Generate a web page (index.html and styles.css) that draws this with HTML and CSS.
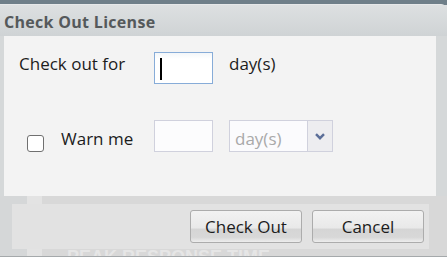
FILE: index.html
```html
<!DOCTYPE html>
<html lang="en">
    <head>
        <meta charset="utf-8">
        <title>Check Out License</title>
        <meta name="viewport" content="width=device-width, initial-scale=1">
        <link rel="stylesheet" href="styles.css">
    </head>
    <body>
		<div class="window">
			<header class="title-bar">Check Out License</header>

			<main class="content">
				<!-- How long to keep the license -->
				<div class="row row-days">
					<span class="label label-days">Check out for</span>
					<span class="field field-active"><span class="caret"></span></span>
					<span class="unit">day(s)</span>
				</div>
				<!-- Reminder before it runs out -->
				<div class="row row-warn">
					<span class="check"></span>
					<span class="label label-warn">Warn me</span>
					<span class="field"></span>
					<span class="select">
						<span class="select-text">day(s)</span>
						<span class="select-arrow">
							<svg width="10" height="7" viewBox="0 0 10 7"><path d="M1 1.2 L5 5.2 L9 1.2" fill="none" stroke="#5b6e98" stroke-width="2.4"/></svg>
						</span>
					</span>
				</div>
			</main>

			<footer class="footer">
				<div class="button-bar">
					<button class="btn">Check Out</button>
					<button class="btn">Cancel</button>
				</div>
				<div class="behind">Peak Response Time</div>
			</footer>
		</div>
    </body>
</html>
```

FILE: styles.css
```css
/* Reset */
*,
*::after,
*::before {
	margin: 0;
	padding: 0;
	box-sizing: border-box;
}

body {
	font-family: "Open Sans", sans-serif;
	background: #6f7f89;
	overflow: hidden;
}

/* Window */
.window {
	margin-top: 4px;
	height: 253px;
	background: #d5d8d9;
	border-top: 1px solid #e6e8e9;
	border-top-right-radius: 6px;
}

.title-bar {
	height: 31px;
	padding: 6px 0 0 4px;
	font-size: 16px;
	font-weight: bold;
	letter-spacing: 0.3px;
	line-height: 22px;
	color: #55595b;
	background: linear-gradient(#dde0e1, #cfd3d5);
}

/* Form */
.content {
	margin-left: 4px;
	width: 432px;
	height: 160px;
	padding: 16px 0 0 15px;
	background: #f3f3f3;
}

.row {
	display: flex;
	align-items: flex-start;
	height: 32px;
}

.row-warn {
	margin-top: 36px;
}

.label,
.unit {
	font-size: 17px;
	line-height: 23px;
	color: #1c1c1c;
}

.label-days {
	width: 135px;
}

.unit {
	margin-left: 16px;
}

.field {
	display: block;
	width: 59px;
	height: 32px;
	border: 1px solid #d0d1dd;
	background: #fcfcfd;
}

.field-active {
	padding: 5px 0 0 5px;
	border-color: #87acd8;
	background: linear-gradient(#f3f6f9, #fff 6px);
}

.caret {
	display: block;
	width: 2px;
	height: 22px;
	background: #000;
}

.check {
	width: 17px;
	height: 17px;
	margin: 15px 0 0 8px;
	border: 1px solid #707070;
	border-radius: 3px;
	background: #fff;
}

.label-warn {
	width: 93px;
	margin: 7px 0 0 17px;
}

.select {
	display: flex;
	width: 104px;
	height: 32px;
	margin-left: 16px;
	border: 1px solid #d0d1dd;
	background: #fbfbfd;
}

.select-text {
	flex: 1;
	padding: 6px 0 0 5px;
	font-size: 17px;
	line-height: 23px;
	color: #a9a9a9;
}

.select-arrow {
	display: flex;
	justify-content: center;
	align-items: center;
	width: 25px;
	border-left: 1px solid #d0d1dd;
	background: #ededf0;
}

/* Footer */
.footer {
	height: 61px;
	padding-top: 8px;
	border-bottom: 1px solid #a5a9ab;
	background: linear-gradient(to right, #d5d7d8 27px, #e3e3e3 27px 42px, #d8d8d8 42px);
}

.button-bar {
	display: flex;
	justify-content: flex-end;
	align-items: center;
	gap: 10px;
	width: 417px;
	height: 45px;
	margin-left: 12px;
	padding-right: 5px;
	background: #e2e2e2;
}

.btn {
	width: 112px;
	height: 33px;
	border: 1px solid #acacac;
	border-radius: 3px;
	font-family: "Open Sans", sans-serif;
	font-size: 17px;
	color: #1c1c1c;
	background: linear-gradient(#f2f2f2, #e9e9e9 55%, #d5d5d5 58%, #d8d8d8 85%, #ededed);
}

.behind {
	height: 7px;
	overflow: hidden;
	padding-left: 67px;
	font: bold 18px/16px "Liberation Sans", sans-serif;
	text-transform: uppercase;
	color: #e6e6e6;
}
```
